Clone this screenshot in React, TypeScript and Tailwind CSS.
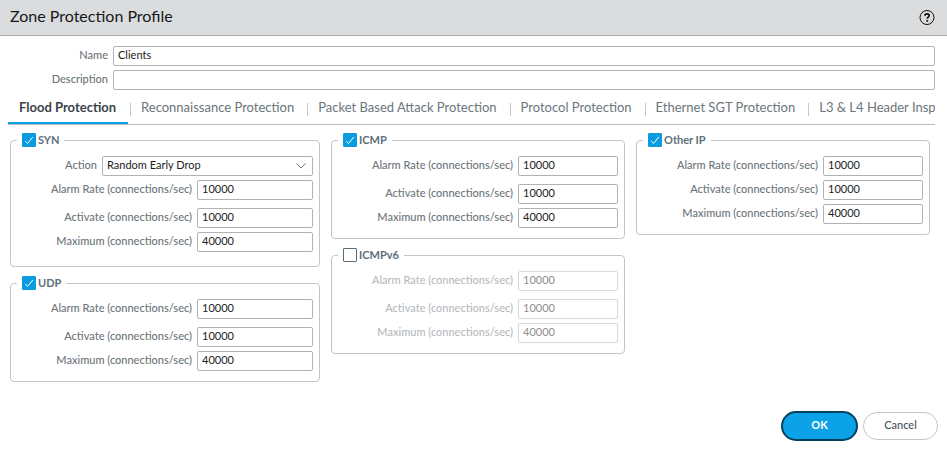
import { useId, useState } from "react";

const TABS = [
  "Flood Protection",
  "Reconnaissance Protection",
  "Packet Based Attack Protection",
  "Protocol Protection",
  "Ethernet SGT Protection",
  "L3 & L4 Header Insp",
];

const FIELD =
  "h-5 w-full min-w-0 flex-1 rounded-xs border border-[#b0b3b6] bg-white px-1 text-[11px] text-[#1c1c1c] outline-none focus:border-[#0a9fe4] disabled:border-[#d8dadb] disabled:text-[#8e8e8e]";

function TextRow({ label, value = "" }: { label: string; value?: string }) {
  const id = useId();
  return (
    <div className="flex items-center gap-[5px]">
      <label htmlFor={id} className="w-[100px] pb-0.5 text-right font-medium text-[#6c757b]">
        {label}
      </label>
      <input id={id} type="text" defaultValue={value} className={`${FIELD} pb-[3px]`} />
    </div>
  );
}

function RateRow({
  label,
  value,
  disabled,
  spaced,
}: {
  label: string;
  value: string;
  disabled?: boolean;
  spaced?: boolean;
}) {
  const id = useId();
  return (
    <div className={spaced ? "mb-1 flex items-center gap-[5px]" : "flex items-center gap-[5px]"}>
      <label
        htmlFor={id}
        className={
          disabled
            ? "w-[181px] shrink-0 pb-0.5 text-right font-medium text-[#b6babd]"
            : "w-[181px] shrink-0 pb-0.5 text-right font-medium text-[#6c757b]"
        }
      >
        {label} (connections/sec)
      </label>
      <input
        id={id}
        type="text"
        defaultValue={value}
        disabled={disabled}
        className={`${FIELD} pb-[3px]`}
      />
    </div>
  );
}

function ActionRow() {
  const id = useId();
  return (
    <div className="flex items-center gap-[5px]">
      <label htmlFor={id} className="w-[86px] shrink-0 pb-0.5 text-right font-medium text-[#6c757b]">
        Action
      </label>
      <div className="relative flex min-w-0 flex-1">
        <select id={id} className={`${FIELD} appearance-none pb-0.5`}>
          <option>Random Early Drop</option>
          <option>SYN Cookies</option>
        </select>
        <svg
          viewBox="0 0 10 6"
          className="pointer-events-none absolute top-[7px] right-[7px] h-1.5 w-2.5"
          fill="none"
          stroke="#6b7479"
        >
          <path d="M0.5 0.5 5 5 9.5 0.5" />
        </svg>
      </div>
    </div>
  );
}

function ProtocolGroup({
  title,
  enabled = true,
  compact,
  withAction,
}: {
  title: string;
  enabled?: boolean;
  compact?: boolean;
  withAction?: boolean;
}) {
  const id = useId();
  const [on, setOn] = useState(enabled);
  return (
    <fieldset
      className={
        withAction
          ? "min-w-0 rounded-sm border border-[#c3c6c8] pr-1.5 pb-3.5 pl-0"
          : "min-w-0 rounded-sm border border-[#c3c6c8] pr-1.5 pb-2.5 pl-0"
      }
    >
      <legend className="ml-1.5 px-[5px]">
        <span className="flex h-3.5 items-center gap-0.5">
          <span className="grid size-3.5">
            <input
              id={id}
              type="checkbox"
              checked={on}
              onChange={(e) => setOn(e.target.checked)}
              className="col-start-1 row-start-1 size-3.5 appearance-none rounded-[1px] border border-[#5d6b75] bg-white checked:border-[#0a9be0] checked:bg-[#0a9be0]"
            />
            {on && (
              <svg
                viewBox="0 0 14 14"
                className="pointer-events-none col-start-1 row-start-1 size-3.5"
                fill="none"
                stroke="#fff"
              >
                <path d="M3.2 8 5.6 10.4 10.8 4" />
              </svg>
            )}
          </span>
          <label htmlFor={id} className="font-bold text-[#5d6f7b]">
            {title}
          </label>
        </span>
      </legend>
      <div className="flex flex-col gap-1 pt-[9px]">
        {withAction && <ActionRow />}
        <RateRow label="Alarm Rate" value="10000" disabled={!on} spaced={!compact} />
        <RateRow label="Activate" value="10000" disabled={!on} />
        <RateRow label="Maximum" value="40000" disabled={!on} />
      </div>
    </fieldset>
  );
}

export default function App() {
  const [active, setActive] = useState(0);
  return (
    <div className="flex min-h-screen flex-col bg-white font-[Lato,'Open_Sans',sans-serif] text-[11px] leading-4">
      <header className="flex h-9 items-center justify-between border-b border-[#a9abad] bg-[#dbdcde] pr-3 pl-2.5">
        <h1 className="pb-1 text-base text-[#15181a]">Zone Protection Profile</h1>
        <button type="button" aria-label="Help" className="size-4">
          <svg viewBox="0 0 16 16" className="size-4" fill="none" stroke="#111">
            <circle cx="8" cy="7.5" r="7" />
            <path d="M5.9 5.8C6 4.300 7 3.800 8.100 3.800c1.200 0 2.100.7 2.100 1.800 0 1.500-2 1.500-2 3.100" strokeWidth="1.700" />
            <path d="M8.200 10v1.700" strokeWidth="1.800" />
          </svg>
        </button>
      </header>

      <div className="flex flex-col gap-1 pt-2.5 pr-3 pl-2">
        <TextRow label="Name" value="Clients" />
        <TextRow label="Description" />
      </div>

      <nav role="tablist" className="mt-1 mr-3 ml-2 flex h-[31px] overflow-hidden border-b border-[#b9bcbe]">
        {TABS.map((tab, i) => (
          <div key={tab} className="flex shrink-0">
            {i > 0 && <span className="mt-[9px] ml-[2px] h-[13px] w-px bg-[#c3c8cb]" />}
            <button
              type="button"
              role="tab"
              aria-selected={i === active}
              onClick={() => setActive(i)}
              className={
                i === active
                  ? "border-b-2 border-[#0aa0e6] pr-3 pb-[3px] pl-[11px] text-[13px] font-bold whitespace-nowrap text-[#39434a]"
                  : "border-b-2 border-transparent pr-[11px] pb-[3px] pl-2.5 text-[13px] whitespace-nowrap text-[#6c757b]"
              }
            >
              {tab}
            </button>
          </div>
        ))}
      </nav>

      <main className="grid grid-cols-[minmax(0,310fr)_minmax(0,294fr)_minmax(0,294fr)] items-start gap-x-[11px] pt-2 pr-[17px] pl-2.5">
        <div className="flex min-w-0 flex-col gap-[9px]">
          <ProtocolGroup title="SYN" withAction />
          <ProtocolGroup title="UDP" />
        </div>
        <div className="flex min-w-0 flex-col gap-[9px]">
          <ProtocolGroup title="ICMP" />
          <ProtocolGroup title="ICMPv6" enabled={false} />
        </div>
        <ProtocolGroup title="Other IP" compact />
      </main>

      <footer className="mt-auto flex items-center justify-end gap-[5px] pt-4 pr-[9px] pb-3.5">
        <button
          type="button"
          className="h-[30px] w-[77px] rounded-full border-2 border-[#06415c] bg-[#0ca2e8] pb-0.5 font-bold text-white"
        >
          OK
        </button>
        <button
          type="button"
          className="h-7 w-[75px] rounded-full border border-[#c3c6c8] bg-white pb-0.5 font-medium text-[#4a5258]"
        >
          Cancel
        </button>
      </footer>
    </div>
  );
}
